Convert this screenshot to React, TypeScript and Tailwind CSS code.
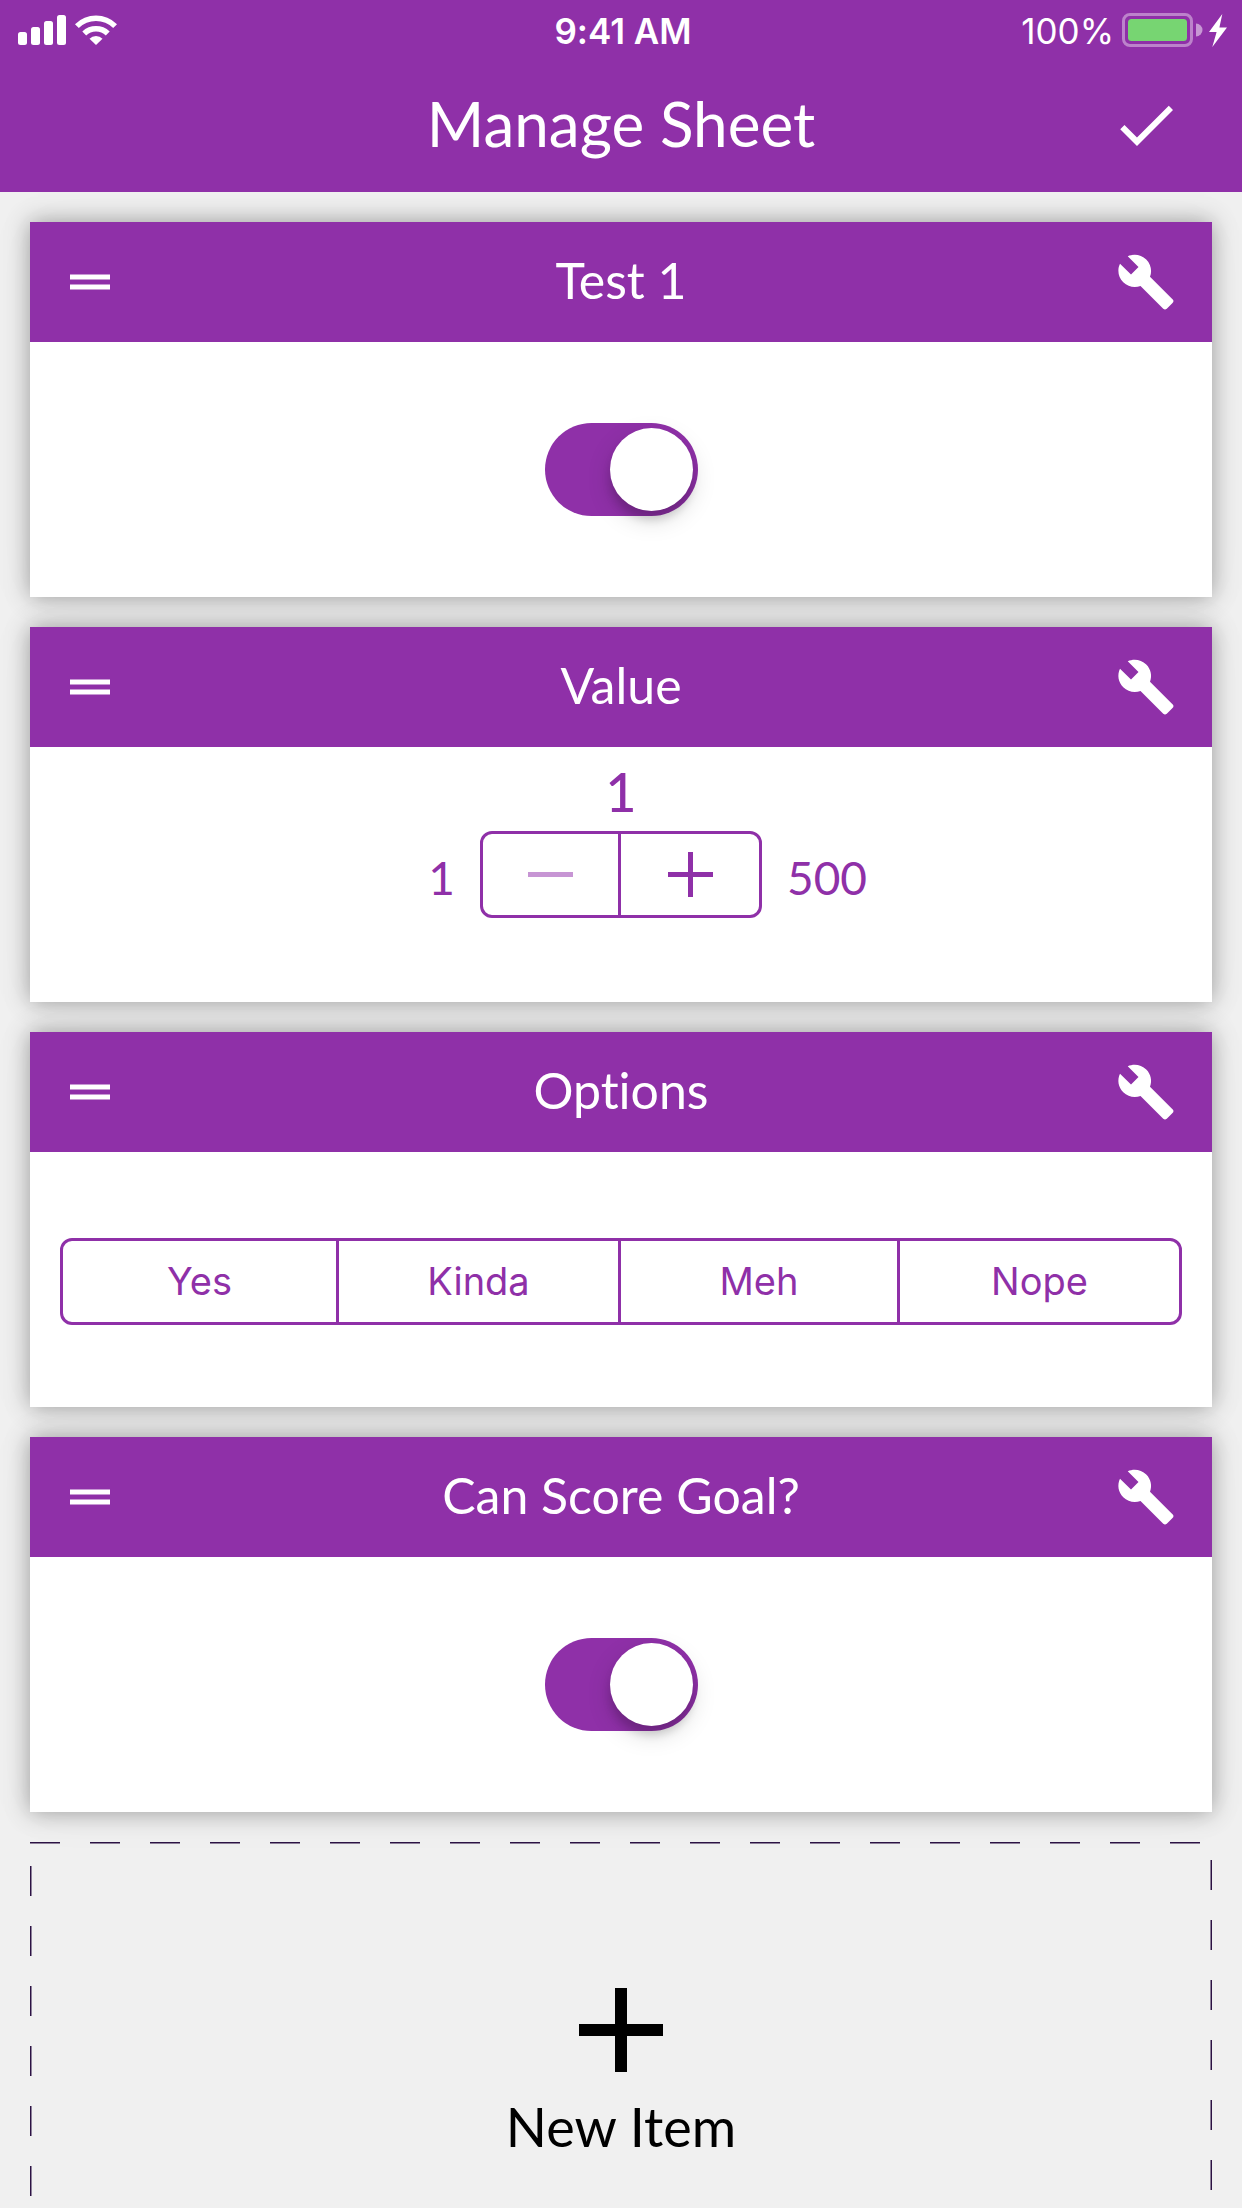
import { useState } from "react";
import type { ReactNode } from "react";

const ICON_CHECK = "M9 16.17L4.83 12l-1.42 1.41L9 19 21 7l-1.41-1.41z";
const ICON_HANDLE = "M20 9H4v2h16V9zM4 15h16v-2H4v2z";
const ICON_WRENCH =
  "M22.7 19l-9.1-9.1c.9-2.3.4-5-1.5-6.9-2-2-5-2.4-7.4-1.3L9 6 6 9 1.6 4.7C.4 7.1.9 10.1 2.9 12.1c1.9 1.9 4.6 2.4 6.9 1.5l9.1 9.1c.4.4 1 .4 1.4 0l2.3-2.3c.5-.4.5-1.1.1-1.4z";
const ICON_ADD = "M19 13h-6v6h-2v-6H5v-2h6V5h2v6h6v2z";

function Icon({ path, className }: { path: string; className: string }) {
  return (
    <svg viewBox="0 0 24 24" fill="currentColor" aria-hidden="true" className={className}>
      <path d={path} />
    </svg>
  );
}

function StatusBar() {
  return (
    <div className="grid h-[60px] grid-cols-[1fr_auto_1fr] items-center pl-[18px] pr-[14px] font-['Inter',sans-serif] text-[35px] leading-[54px]">
      <svg viewBox="0 0 100 30" fill="currentColor" aria-hidden="true" className="h-[30px] w-[100px]">
        <rect x="0" y="17" width="9" height="13" rx="2.5" />
        <rect x="13" y="12" width="9" height="18" rx="2.5" />
        <rect x="26" y="6" width="9" height="24" rx="2.5" />
        <rect x="39" y="0" width="9" height="30" rx="2.5" />
        <path d="M57 9.2a30 30 0 0 1 42 0L95.2 13a24.5 24.5 0 0 0-34.4 0z" />
        <path d="M64.3 16.5a19.5 19.5 0 0 1 27.4 0L87.8 20.4a14 14 0 0 0-19.6 0z" />
        <path d="M71.5 23.7a9 9 0 0 1 13 0L78 30z" />
      </svg>
      <span className="pt-0.5 font-semibold">9:41 AM</span>
      <div className="flex items-center justify-end gap-2">
        <span className="pt-0.5">100%</span>
        <svg viewBox="0 0 106 34" aria-hidden="true" className="h-[34px] w-[106px]">
          <rect x="1.5" y="1.5" width="68" height="31" rx="6.5" fill="none" stroke="#fff" strokeOpacity="0.4" strokeWidth="3" />
          <rect x="6" y="6" width="59" height="22" rx="3.5" fill="#77d572" />
          <path d="M74 10.5a6.5 6.5 0 0 1 0 13z" fill="#fff" fillOpacity="0.5" />
          <path d="M100.3 1L87 19h7.6L90.3 34 105 14.6h-7.6z" fill="#fff" />
        </svg>
      </div>
    </div>
  );
}

function Card({ id, title, children }: { id: string; title: string; children: ReactNode }) {
  return (
    <section
      aria-labelledby={id}
      className="relative shrink-0 before:absolute before:inset-0 before:-z-10 before:shadow-[0_0_22px_rgba(0,0,0,0.35),0_0_54px_rgba(0,0,0,0.04)]"
    >
      <header className="grid h-[120px] grid-cols-[66px_1fr_66px] items-center bg-[#8f30a8] px-[30px] text-white">
        <button type="button" aria-label={`Reorder ${title}`}>
          <Icon path={ICON_HANDLE} className="size-[60px]" />
        </button>
        <h2 id={id} className="pb-1 text-center text-[50px] leading-[60px]">
          {title}
        </h2>
        <button type="button" aria-label={`Edit ${title}`}>
          <Icon path={ICON_WRENCH} className="size-[60px]" />
        </button>
      </header>
      <div className="flex h-[255px] flex-col items-stretch justify-center bg-white px-[30px] text-[#8f30a8]">
        {children}
      </div>
    </section>
  );
}

function Toggle({ labelledBy }: { labelledBy: string }) {
  return (
    <input
      type="checkbox"
      role="switch"
      defaultChecked
      aria-labelledby={labelledBy}
      className="flex h-[93px] w-[153px] cursor-pointer appearance-none items-center self-center rounded-full bg-gray-300 px-[5px] before:size-[83px] before:rounded-full before:bg-white before:shadow-[0_9px_24px_rgba(0,0,0,0.15),0_9px_9px_rgba(0,0,0,0.14)] checked:justify-end checked:bg-[#8f30a8]"
    />
  );
}

function Stepper({ min, max }: { min: number; max: number }) {
  const [value, setValue] = useState(min);
  return (
    <div className="flex flex-1 flex-col pt-3">
      <output className="pb-1.5 text-center text-[54px] leading-[66px] font-medium">{value}</output>
      <div className="grid grid-cols-[1fr_auto_1fr] items-center gap-[25px] text-[46px] leading-[60px]">
        <span className="pt-1.5 text-right">{min}</span>
        <div className="grid h-[87px] w-[282px] grid-cols-2 overflow-hidden rounded-xl border-[3px] border-current">
          <button
            type="button"
            aria-label="Decrease"
            disabled={value <= min}
            onClick={() => setValue(value - 1)}
            className="flex items-center justify-center border-r-[3px] border-[#8f30a8]"
          >
            <span className={value <= min ? "h-[5px] w-[45px] bg-[#c795d4]" : "h-[5px] w-[45px] bg-current"} />
          </button>
          <button
            type="button"
            aria-label="Increase"
            disabled={value >= max}
            onClick={() => setValue(value + 1)}
            className="flex items-center justify-center"
          >
            <svg viewBox="0 0 45 45" fill="currentColor" aria-hidden="true" className="size-[45px]">
              <path d="M20 0h5v20h20v5H25v20h-5V25H0v-5h20z" />
            </svg>
          </button>
        </div>
        <span className="pt-1.5">{max}</span>
      </div>
    </div>
  );
}

function Segments({ options }: { options: string[] }) {
  const [selected, setSelected] = useState<string | null>(null);
  return (
    <div className="mt-1 grid h-[87px] grid-cols-[276fr_282fr_279fr_279fr] overflow-hidden rounded-xl border-[3px] border-current font-['Inter',sans-serif] text-[38px] leading-[48px]">
      {options.map((option) => (
        <button
          key={option}
          type="button"
          aria-pressed={selected === option}
          onClick={() => setSelected(option)}
          className="border-r-[3px] border-[#8f30a8] pb-0.5 last:border-r-0 aria-pressed:bg-[#8f30a8] aria-pressed:text-white"
        >
          {option}
        </button>
      ))}
    </div>
  );
}

function NewItemButton() {
  return (
    <button type="button" className="relative flex h-[375px] shrink-0 flex-col items-center pt-[116px] text-black">
      <svg aria-hidden="true" className="absolute inset-0 size-full">
        <rect width="100%" height="100%" fill="none" stroke="#2c1244" strokeWidth="3" strokeDasharray="30 30" />
      </svg>
      <Icon path={ICON_ADD} className="size-[144px]" />
      <span className="text-[54px] leading-[50px]">New Item</span>
    </button>
  );
}

export default function App() {
  return (
    <div className="flex h-screen flex-col overflow-hidden bg-[#f0f0f0] font-['Lato',sans-serif] [font-variant-ligatures:none]">
      <header className="relative z-10 bg-[#8f30a8] text-white">
        <StatusBar />
        <div className="grid h-[132px] grid-cols-[72px_1fr_72px] items-center px-[60px] pb-0.5">
          <h1 className="col-start-2 pb-1 text-center text-[62px] leading-[72px]">Manage Sheet</h1>
          <button type="button" aria-label="Done">
            <Icon path={ICON_CHECK} className="size-[72px]" />
          </button>
        </div>
      </header>
      <main className="isolate flex min-h-0 flex-1 flex-col gap-[30px] overflow-y-auto p-[30px] [scrollbar-width:none]">
        <Card id="test-1" title="Test 1">
          <Toggle labelledBy="test-1" />
        </Card>
        <Card id="value" title="Value">
          <Stepper min={1} max={500} />
        </Card>
        <Card id="options" title="Options">
          <Segments options={["Yes", "Kinda", "Meh", "Nope"]} />
        </Card>
        <Card id="can-score-goal" title="Can Score Goal?">
          <Toggle labelledBy="can-score-goal" />
        </Card>
        <NewItemButton />
      </main>
    </div>
  );
}
